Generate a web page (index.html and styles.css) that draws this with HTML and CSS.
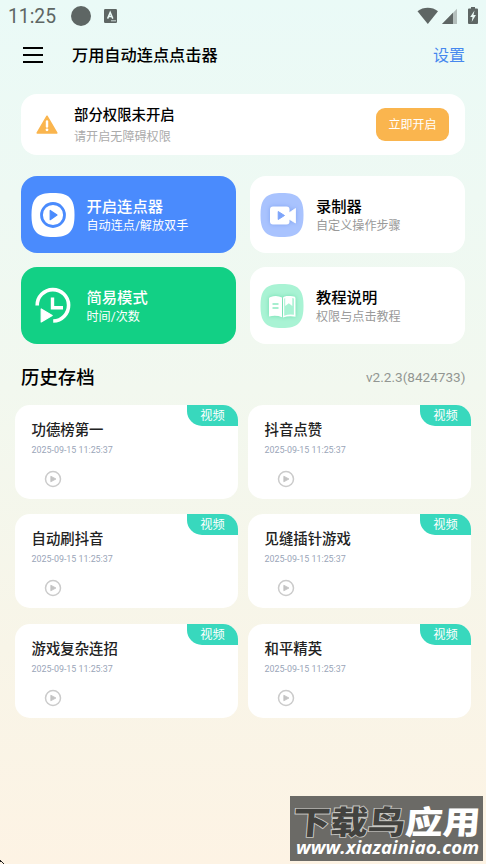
FILE: index.html
```html
<!DOCTYPE html>
<html lang="zh-CN">
<head>
<meta charset="utf-8">
<title>万用自动连点点击器</title>
<link rel="stylesheet" href="styles.css">
</head>
<body>
<svg width="0" height="0" class="defs">
  <symbol id="play" viewBox="0 0 18 18"><circle cx="9" cy="9" r="7.500" fill="none" stroke="#cbcbcb" stroke-width="1.500"/><path d="M6.800 6.200v5.600L12 9z" fill="#c4c4c4" stroke="#c4c4c4" stroke-width=".8" stroke-linejoin="round"/></symbol>
</svg>
<div class="screen">
  <div class="status">
    <span class="time">11:25</span>
    <span class="dot"></span>
    <svg class="kbd" width="13" height="14" viewBox="0 0 13 14"><rect width="13" height="14" rx="1.2" fill="#5e6664"/><path d="M3.600 9.600 6.200 3.400l2.600 6.200M4.600 7.500h3.300" fill="none" stroke="#ebfaf7" stroke-width="1.500"/><path d="M7 11.800h5" stroke="#ebfaf7" stroke-width=".8"/></svg>
    <svg class="signals" width="62" height="18" viewBox="0 0 62 18"><path d="M0.500 4.200C6.500-.4 15-.4 21 4.200L10.800 17z" fill="#5e6664"/><path d="M40 1.800V17H25z" fill="#b4bfbc"/><path d="M36 5.800V17H25z" fill="#5e6664"/><path d="M54 0h4v1.500h2a1 1 0 0 1 1 1V16a1 1 0 0 1-1 1h-8a1 1 0 0 1-1-1V2.500a1 1 0 0 1 1-1h2z" fill="#5e6664"/><path d="M57.500 3.500 53.200 10h2.300l-.8 5 4.200-7h-2.400z" fill="#ebfaf7"/></svg>
  </div>
  <header class="bar">
    <svg width="20" height="16" viewBox="0 0 20 16"><path d="M0 1h20M0 8h20M0 15h20" stroke="#000" stroke-width="2"/></svg>
    <h1>万用自动连点点击器</h1>
    <a>设置</a>
  </header>
  <section class="alert">
    <svg width="22" height="19" viewBox="0 0 22 19"><path d="M11 1.200 20.800 18H1.200z" fill="#fab54e" stroke="#fab54e" stroke-width="1.500" stroke-linejoin="round"/><path d="M11 6.500v5" stroke="#fff" stroke-width="2.400" stroke-linecap="round"/><circle cx="11" cy="14.800" r="1.400" fill="#fff"/></svg>
    <div class="txt"><b>部分权限未开启</b><span>请开启无障碍权限</span></div>
    <button>立即开启</button>
  </section>
  <section class="features">
    <div class="feat blue">
      <svg width="44" height="44" viewBox="0 0 44 44"><path d="M22 0C38 0 43.500 5.500 43.500 22S38 44 22 44 .5 38.500.5 22 6 0 22 0z" fill="#fff"/><circle cx="22" cy="22" r="11.500" fill="none" stroke="#4a8bfd" stroke-width="2.800"/><path d="M19.200 17.500v9.200l6.800-4.600z" fill="#4a8bfd" stroke="#4a8bfd" stroke-width="1.200" stroke-linejoin="round"/></svg>
      <div class="txt"><b>开启连点器</b><span>自动连点/解放双手</span></div>
    </div>
    <div class="feat">
      <svg width="44" height="44" viewBox="0 0 44 44"><path d="M22 0C38 0 43.500 5.500 43.500 22S38 44 22 44 .5 38.500.5 22 6 0 22 0z" fill="#a9c3fe"/><g class="glow-blue"><rect x="10" y="13.500" width="19.500" height="18" rx="3" fill="#fff"/><path d="M28 20.500 35.500 15.500V30L28 25.500z" fill="#fff" stroke="#fff" stroke-width=".8" stroke-linejoin="round"/></g><path d="M18.200 18.500v8l6.300-4z" fill="#7da4fa" stroke="#7da4fa" stroke-width="1" stroke-linejoin="round"/></svg>
      <div class="txt"><b>录制器</b><span>自定义操作步骤</span></div>
    </div>
    <div class="feat green">
      <svg width="44" height="44" viewBox="0 0 44 44"><path d="M6.200 21.500a15.700 15.700 0 1 1 16 15.500" fill="none" stroke="#fff" stroke-width="3.600"/><path d="M21.500 13.500v10.300H32" fill="none" stroke="#fff" stroke-width="3.400"/><path d="M10.200 25v13l11-6.500z" fill="#fff" stroke="#fff" stroke-width="1.200" stroke-linejoin="round"/></svg>
      <div class="txt"><b>简易模式</b><span>时间/次数</span></div>
    </div>
    <div class="feat">
      <svg width="44" height="44" viewBox="0 0 44 44"><path d="M22 0C38 0 43.500 5.500 43.500 22S38 44 22 44 .5 38.500.5 22 6 0 22 0z" fill="#a9f3d4"/><g class="glow-green"><path d="M9 14.500q0-1 1-1.300 6.500-2.700 12 .3v19.700q-6-2.500-13-.7z" fill="#fff"/><path d="M23 13.500q1-.8 2.500-1.200h7q3 0 3 2v18.500q-6-1.500-12.500.7z" fill="#fff"/></g><path d="M24.200 14.800q.6-.6 1-.7v7.900l3.600-2.800 3.500 2.800v-8q1.600 0 1.600.8v16q-5-.8-9.700.9z" fill="#a9f3d4"/><path d="M26 12h5.500v7.500l-2.700-2.200-2.800 2.200z" fill="#fff"/><path d="M12.500 20h6M12.500 24h6" stroke="#8ae9c0" stroke-width="1.500"/></svg>
      <div class="txt"><b>教程说明</b><span>权限与点击教程</span></div>
    </div>
  </section>
  <div class="heading"><h2>历史存档</h2><span>v2.2.3(8424733)</span></div>
  <section class="history">
    <article><em>视频</em><h3>功德榜第一</h3><time>2025-09-15 11:25:37</time><svg><use href="#play"/></svg></article>
    <article><em>视频</em><h3>抖音点赞</h3><time>2025-09-15 11:25:37</time><svg><use href="#play"/></svg></article>
    <article><em>视频</em><h3>自动刷抖音</h3><time>2025-09-15 11:25:37</time><svg><use href="#play"/></svg></article>
    <article><em>视频</em><h3>见缝插针游戏</h3><time>2025-09-15 11:25:37</time><svg><use href="#play"/></svg></article>
    <article><em>视频</em><h3>游戏复杂连招</h3><time>2025-09-15 11:25:37</time><svg><use href="#play"/></svg></article>
    <article><em>视频</em><h3>和平精英</h3><time>2025-09-15 11:25:37</time><svg><use href="#play"/></svg></article>
  </section>
  <svg class="corner" width="4" height="4" viewBox="0 0 4 4"><path d="M0 0h1v1h1v1h1v1h1v1H3V3H2V2H0z" fill="#222"/></svg>
  <div class="watermark">
    <div class="wm-cn"><span class="dark">下载鸟</span><span class="light">应用</span></div>
    <div class="url">www.xiazainiao.com</div>
  </div>
</div>
</body>
</html>
```
FILE: styles.css
```css
* { box-sizing: border-box; margin: 0; padding: 0; }
body { font-family: Roboto, "Noto Sans CJK SC", sans-serif; color: #000; }
.defs { position: absolute; }
.screen {
  position: relative;
  width: 486px;
  height: 864px;
  overflow: hidden;
  background: linear-gradient(#eafaf7, #f2f8ef 45%, #f8f5e8 75%, #fdf3e4);
}
svg { display: block; flex: none; }
.status { display: flex; align-items: center; height: 32px; padding: 0 8px; color: #5e6664; }
.time { width: 63px; font-size: 19.3px; font-weight: 400; line-height: 32px; padding-top: 2px; }
.dot { width: 20px; height: 20px; border-radius: 50%; background: #5e6664; }
.kbd { margin-left: 13px; }
.signals { margin-left: auto; margin-right: -1px; }
.bar { display: flex; align-items: center; height: 46px; padding: 0 21px 0 23px; }
.bar h1 { margin-left: 29px; padding-top: 2px; font-size: 16.2px; font-weight: 500; line-height: 24px; }
.bar a { margin-left: auto; padding-top: 2px; color: #4688ee; font-size: 16px; line-height: 24px; }
.alert {
  display: flex;
  align-items: center;
  height: 61px;
  margin: 16px 21px 0;
  padding: 0 16px 0 15px;
  border-radius: 16px;
  background: #fff;
}
.txt { display: flex; flex-direction: column; padding-top: 2px; white-space: nowrap; }
.alert .txt { margin-left: 16px; padding-top: 3px; }
.alert b { font-size: 14.4px; font-weight: 500; line-height: 22px; }
.alert .txt span { color: #ababab; font-size: 12.1px; line-height: 21px; }
.alert button {
  width: 73px;
  height: 33px;
  margin-left: auto;
  padding-top: 2px;
  border: 0;
  border-radius: 9px;
  background: #fab54e;
  color: #fff;
  font: 12px/31px Roboto, "Noto Sans CJK SC", sans-serif;
}
.features {
  display: grid;
  grid-template-columns: 215px 215px;
  grid-auto-rows: 77px;
  gap: 14px;
  margin: 21px 21px 0;
}
.feat { display: flex; align-items: center; padding: 0 10px; border-radius: 16px; background: #fff; }
.feat .txt { margin-left: 11.5px; }
.feat:nth-child(even) .txt { margin-left: 12px; }
.feat b { font-size: 15.3px; font-weight: 500; line-height: 20px; }
.feat .txt span { color: #999; font-size: 12.1px; line-height: 18px; }
.feat.blue { background: #4a8bfd; color: #fff; }
.feat.green { background: #12d085; color: #fff; }
.feat.blue .txt span, .feat.green .txt span { color: #fff; }
.glow-blue { filter: drop-shadow(0 0 2px #7fa2f2); }
.glow-green { filter: drop-shadow(0 0 2px #6fdcae); }
.heading { display: flex; align-items: center; justify-content: space-between; height: 61px; padding: 7px 20.5px 0 21px; }
.heading h2 { font-size: 18.4px; font-weight: 500; line-height: 28px; }
.heading span { padding-bottom: 2px; color: #929692; font-size: 13.6px; }
.history {
  display: grid;
  grid-template-columns: 223px 223px;
  grid-auto-rows: 94px;
  gap: 15.4px 10px;
  padding: 0 15px;
}
article { position: relative; padding: 15px 16.5px 0; border-radius: 15px; background: #fff; }
article em {
  position: absolute;
  top: 0;
  right: 0;
  width: 51px;
  height: 21px;
  padding-top: 1px;
  border-radius: 0 15px 0 15px;
  background: #38d8bd;
  color: #fff;
  font-size: 12.2px;
  font-style: normal;
  line-height: 20px;
  text-align: center;
}
h3 { color: #222; font-size: 14.4px; font-weight: 500; line-height: 22px; }
time { display: block; color: #9aa5b8; font-size: 8.9px; line-height: 16px; }
article svg { width: 18px; height: 18px; margin: 12px 0 0 12px; }
.corner { position: absolute; left: 0; bottom: 0; }
.watermark { position: absolute; left: 290px; top: 796px; width: 193px; height: 65px; padding: 6px 0 0 3px; background: #6b6a66; white-space: nowrap; }
.wm-cn { display: flex; height: 36px; font: 900 37.5px/36px "Noto Sans CJK SC", sans-serif; transform: scaleY(.86) skewX(-4deg); }
.dark { color: #42423f; -webkit-text-stroke: 2px #c9c8c3; paint-order: stroke; }
.light { color: #fff; }
.url { padding-left: 3px; color: #fff; font: italic 700 18.6px/18px "Open Sans", sans-serif; letter-spacing: .1px; }
```
